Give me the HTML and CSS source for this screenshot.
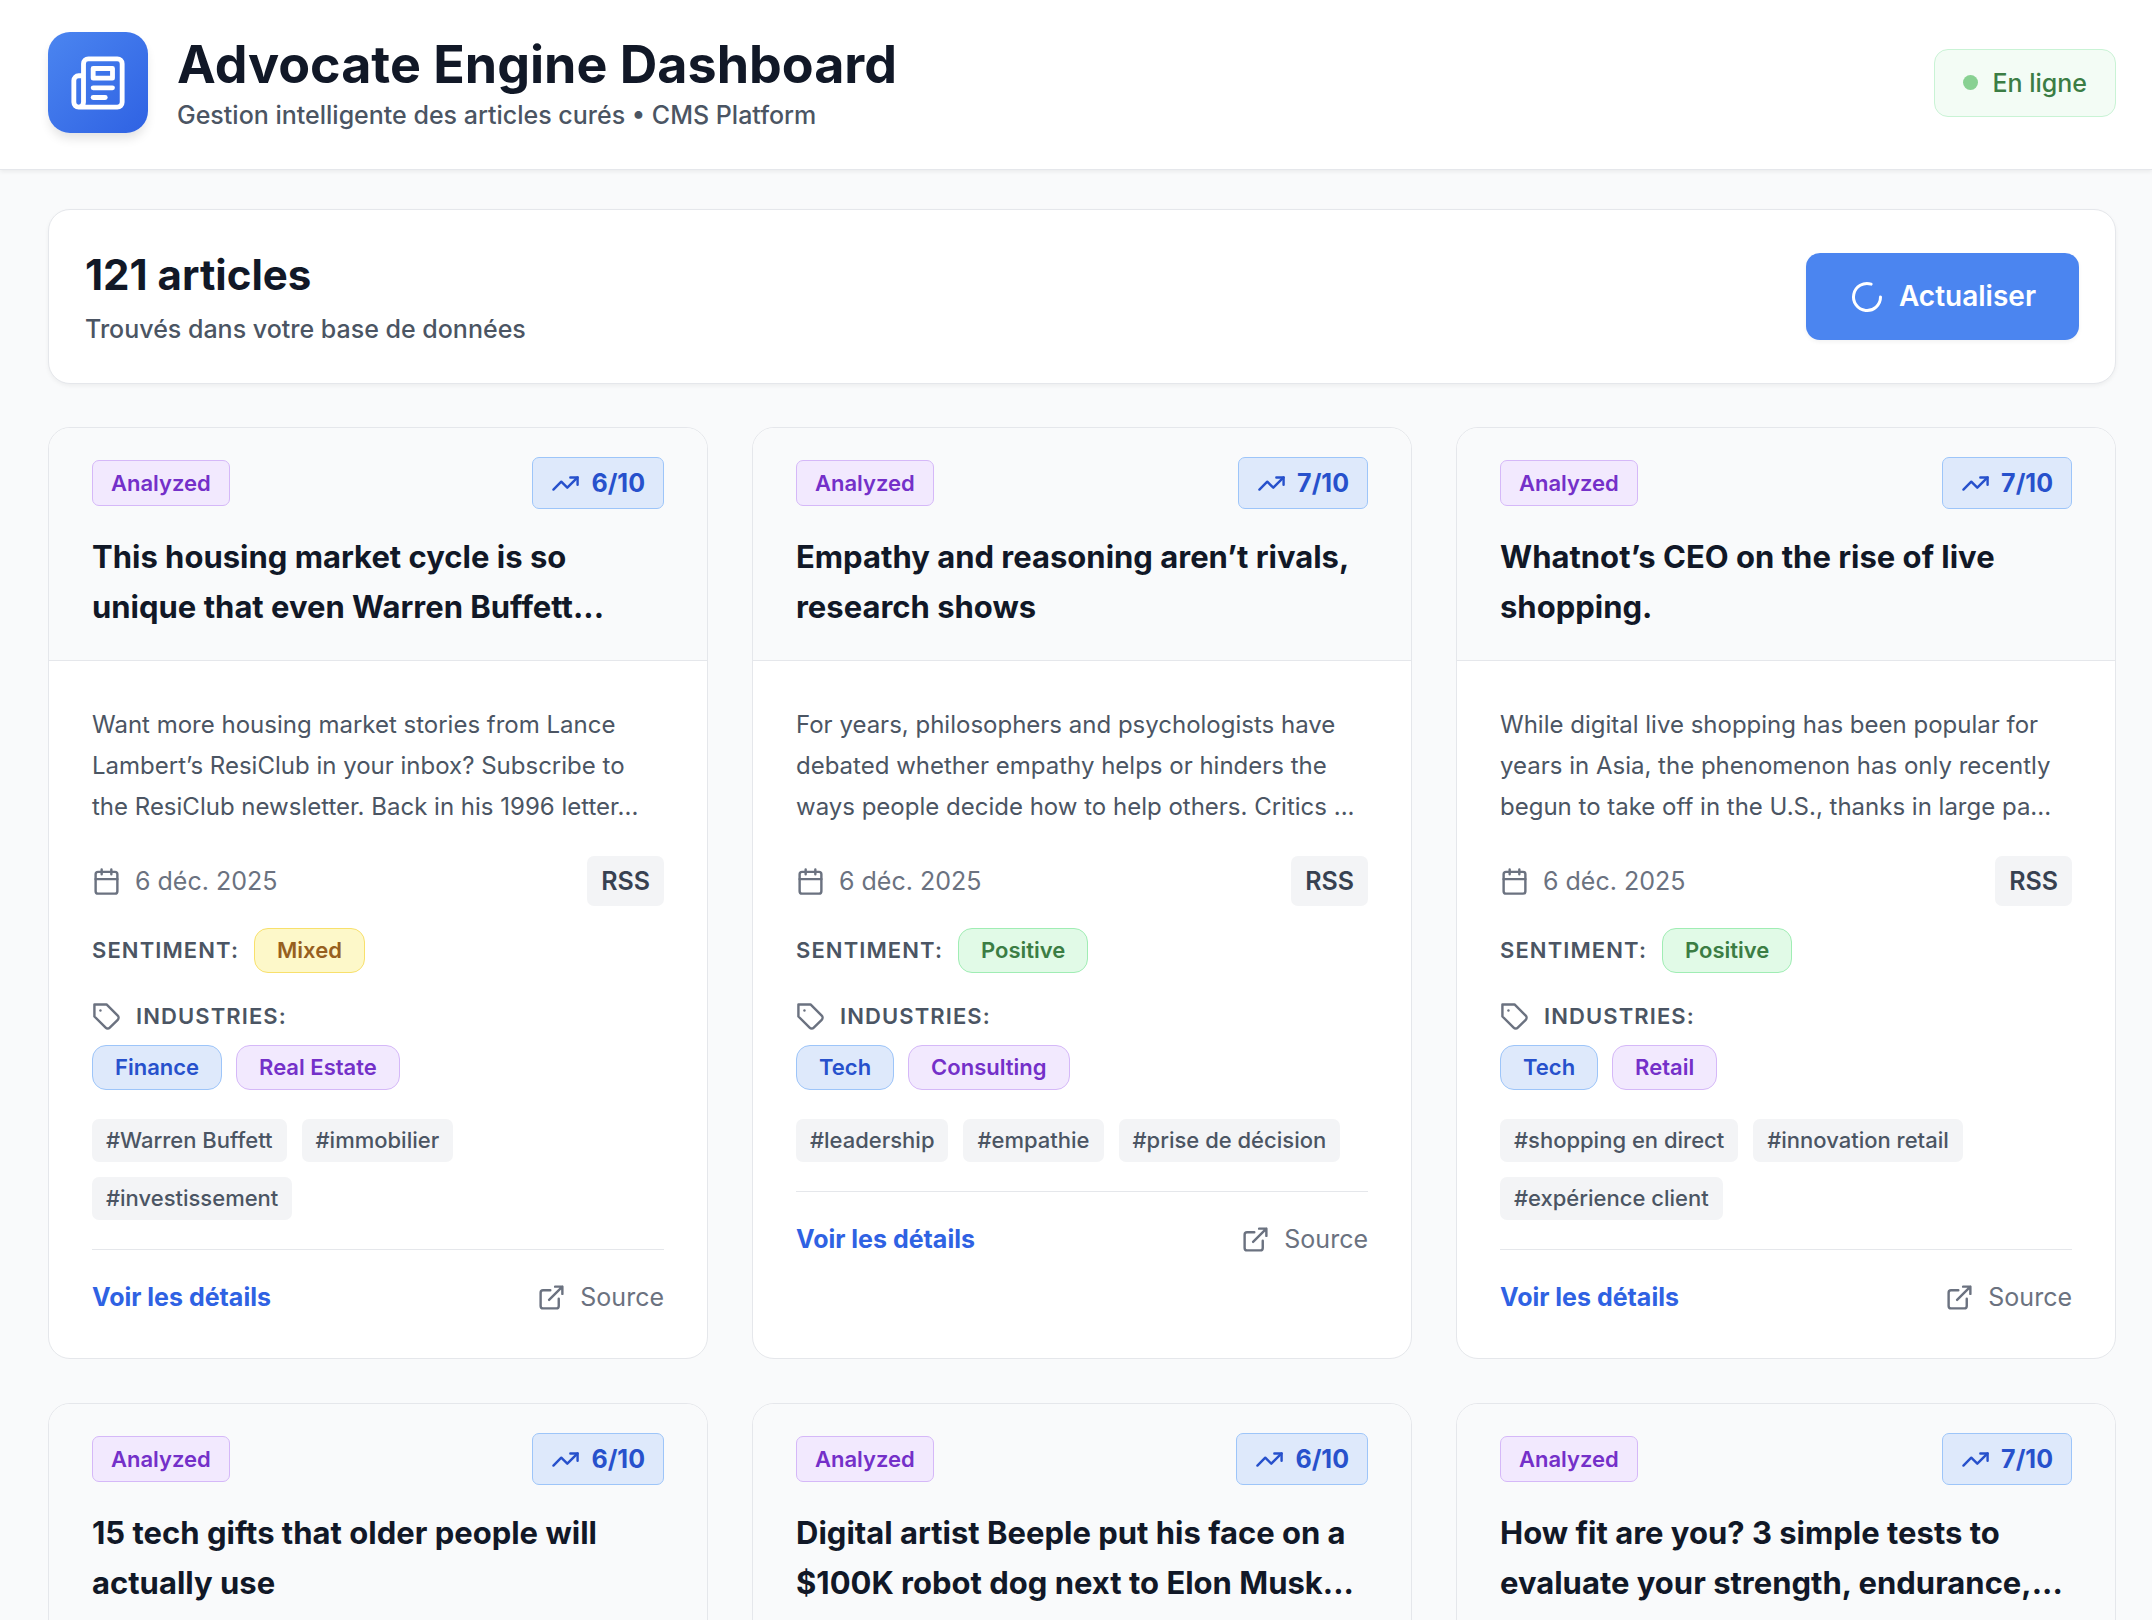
FILE: index.html
```html
<!DOCTYPE html>
<html lang="fr">
<head>
  <meta charset="UTF-8">
  <meta name="viewport" content="width=device-width, initial-scale=1.0">
  <title>Advocate Engine Dashboard</title>
  <link rel="stylesheet" href="styles.css">
</head>
<body>

  <!-- Shared icons -->
  <svg class="sprite" aria-hidden="true">
    <symbol id="icon-news" viewBox="0 0 24 24">
      <path d="M4 22h16a2 2 0 0 0 2-2V4a2 2 0 0 0-2-2H8a2 2 0 0 0-2 2v16a2 2 0 0 1-2 2Zm0 0a2 2 0 0 1-2-2v-9c0-1.100.900-2 2-2h2"/>
      <path d="M18 14h-8"/>
      <path d="M15 18h-5"/>
      <path d="M10 6h8v4h-8V6Z"/>
    </symbol>
    <symbol id="icon-trend" viewBox="0 0 24 24">
      <path d="M22 7 13.500 15.500 8.500 10.500 2 17"/>
      <path d="M16 7h6v6"/>
    </symbol>
    <symbol id="icon-calendar" viewBox="0 0 24 24">
      <rect x="3" y="4" width="18" height="18" rx="2"/>
      <path d="M16 2v4M8 2v4M3 10h18"/>
    </symbol>
    <symbol id="icon-tag" viewBox="0 0 24 24">
      <path d="M12 2H2v10l9.290 9.290c.940.940 2.480.940 3.420 0l6.580-6.580c.940-.940.940-2.480 0-3.420L12 2Z"/>
      <path d="M7 7h.010"/>
    </symbol>
    <symbol id="icon-link" viewBox="0 0 24 24">
      <path d="M18 13v6a2 2 0 0 1-2 2H5a2 2 0 0 1-2-2V8a2 2 0 0 1 2-2h6"/>
      <path d="M15 3h6v6M10 14 21 3"/>
    </symbol>
    <symbol id="icon-loader" viewBox="0 0 24 24">
      <path d="M21 12a9 9 0 1 1-6.219-8.560"/>
    </symbol>
  </svg>

  <header class="header">
    <div class="brand">
      <div class="logo"><svg class="icon"><use href="#icon-news"/></svg></div>
      <div>
        <h1>Advocate Engine Dashboard</h1>
        <p class="subtitle">Gestion intelligente des articles curés • CMS Platform</p>
      </div>
    </div>
    <div class="status"><span class="dot"></span>En ligne</div>
  </header>

  <main class="main">
    <section class="toolbar">
      <div>
        <h2>121 articles</h2>
        <p class="subtitle">Trouvés dans votre base de données</p>
      </div>
      <button class="refresh" type="button"><svg class="icon"><use href="#icon-loader"/></svg>Actualiser</button>
    </section>

    <div class="grid" id="articles"></div>
  </main>

  <script>
    var articles = [
      {
        score: 6,
        title: "This housing market cycle is so unique that even Warren Buffett...",
        text: "Want more housing market stories from Lance Lambert’s ResiClub in your inbox? Subscribe to the ResiClub newsletter. Back in his 1996 letter...",
        sentiment: "Mixed",
        industries: ["Finance", "Real Estate"],
        tags: ["Warren Buffett", "immobilier", "investissement"]
      },
      {
        score: 7,
        title: "Empathy and reasoning aren’t rivals, research shows",
        text: "For years, philosophers and psychologists have debated whether empathy helps or hinders the ways people decide how to help others. Critics ...",
        sentiment: "Positive",
        industries: ["Tech", "Consulting"],
        tags: ["leadership", "empathie", "prise de décision"]
      },
      {
        score: 7,
        title: "Whatnot’s CEO on the rise of live shopping.",
        text: "While digital live shopping has been popular for years in Asia, the phenomenon has only recently begun to take off in the U.S., thanks in large pa...",
        sentiment: "Positive",
        industries: ["Tech", "Retail"],
        tags: ["shopping en direct", "innovation retail", "expérience client"]
      },
      { score: 6, title: "15 tech gifts that older people will actually use" },
      { score: 6, title: "Digital artist Beeple put his face on a $100K robot dog next to Elon Musk..." },
      { score: 7, title: "How fit are you? 3 simple tests to evaluate your strength, endurance,..." }
    ];

    function icon(name) {
      return `<svg class="icon"><use href="#icon-${name}"/></svg>`;
    }

    function renderBody(article) {
      if (!article.text) {
        return "";
      }

      var industries = article.industries.map(function(name, index) {
        return `<span class="pill ${index === 0 ? "blue" : "purple"}">${name}</span>`;
      }).join("");

      var tags = article.tags.map(function(tag) {
        return `<span class="tag">#${tag}</span>`;
      }).join("");

      return `
        <p class="excerpt">${article.text}</p>
        <div class="meta">
          <span class="date">${icon("calendar")}6 déc. 2025</span>
          <span class="source-type">RSS</span>
        </div>
        <div class="sentiment">
          <span class="label">Sentiment:</span>
          <span class="pill ${article.sentiment.toLowerCase()}">${article.sentiment}</span>
        </div>
        <div class="label industries-label">${icon("tag")}Industries:</div>
        <div class="pills">${industries}</div>
        <div class="tags">${tags}</div>
        <div class="card-footer">
          <button class="details" type="button">Voir les détails</button>
          <a class="source" href="#">${icon("link")}Source</a>
        </div>`;
    }

    document.getElementById("articles").innerHTML = articles.map(function(article) {
      return `
        <article class="card">
          <div class="card-header">
            <div class="card-top">
              <span class="state">Analyzed</span>
              <span class="score">${icon("trend")}${article.score}/10</span>
            </div>
            <h3>${article.title}</h3>
          </div>
          <div class="card-body">${renderBody(article)}</div>
        </article>`;
    }).join("");
  </script>

</body>
</html>
```

FILE: styles.css
```css
* {
  box-sizing: border-box;
}

body {
  font-family: Inter, "Liberation Sans", sans-serif;
  font-size: 25px;
  line-height: 36px;
  background-color: #f9fafb;
  color: #111827;
  margin: 0;
}

h1, h2, h3, p {
  margin: 0;
}

button {
  font-family: inherit;
  cursor: pointer;
}

.sprite {
  display: none;
}

.icon {
  width: 29px;
  height: 29px;
  flex-shrink: 0;
  fill: none;
  stroke: currentColor;
  stroke-width: 2;
  stroke-linecap: round;
  stroke-linejoin: round;
}

.header {
  display: flex;
  align-items: center;
  justify-content: space-between;
  padding: 32px 36px 36px 48px;
  background-color: #fff;
  border-bottom: 1px solid #e5e7eb;
  box-shadow: 0 2px 4px rgba(0, 0, 0, 0.06);
}

.brand {
  display: flex;
  align-items: center;
  gap: 29px;
}

.logo {
  display: flex;
  align-items: center;
  justify-content: center;
  width: 100px;
  height: 101px;
  border-radius: 22px;
  background: linear-gradient(135deg, #4b85f0, #2f62e3);
  box-shadow: 0 7px 11px -2px rgba(0, 0, 0, 0.12);
  color: #fff;
}

.logo .icon {
  width: 58px;
  height: 58px;
}

h1 {
  font-size: 52px;
  font-weight: 700;
  line-height: 64px;
}

.subtitle {
  color: #4b5563;
  font-weight: 500;
}

.status {
  display: flex;
  align-items: center;
  gap: 14px;
  padding: 15px 28px;
  border: 1px solid #c9f3d5;
  border-radius: 14px;
  background-color: #f3fcf5;
  color: #3b7d44;
  font-weight: 500;
}

.dot {
  width: 15px;
  height: 15px;
  border-radius: 50%;
  background-color: #88d192;
}

.main {
  padding: 39px 36px 44px 48px;
}

.toolbar {
  display: flex;
  align-items: center;
  justify-content: space-between;
  padding: 36px;
  margin-bottom: 43px;
  border: 1px solid #e5e7eb;
  border-radius: 22px;
  background-color: #fff;
  box-shadow: 0 2px 4px rgba(0, 0, 0, 0.05);
}

h2 {
  font-size: 42px;
  font-weight: 700;
  line-height: 58px;
  margin-bottom: 7px;
}

.refresh {
  display: flex;
  align-items: center;
  gap: 14px;
  padding: 22px 43px;
  border: none;
  border-radius: 14px;
  background-color: #4b85f0;
  color: #fff;
  font-size: 28px;
  font-weight: 600;
  line-height: 43px;
  box-shadow: 0 2px 4px rgba(0, 0, 0, 0.05);
}

.refresh .icon {
  width: 36px;
  height: 36px;
}

.grid {
  display: grid;
  grid-template-columns: repeat(3, 1fr);
  gap: 44px;
}

.card {
  border: 1px solid #e5e7eb;
  border-radius: 22px;
  background-color: #fff;
  overflow: hidden;
}

.card-header {
  padding: 29px 43px 28px;
  border-bottom: 1px solid #e5e7eb;
  background-color: #f9fafb;
}

.card-top {
  display: flex;
  align-items: center;
  justify-content: space-between;
  margin-bottom: 23px;
}

.state {
  padding: 7px 18px;
  border: 1px solid #d5b8f8;
  border-radius: 7px;
  background-color: #f2e9fe;
  color: #7430c9;
  font-size: 22px;
  font-weight: 600;
  line-height: 30px;
}

.score {
  display: flex;
  align-items: center;
  gap: 11px;
  padding: 7px 18px;
  border: 1px solid #9dc5f9;
  border-radius: 7px;
  background-color: #dee9fb;
  color: #2751cc;
  font-weight: 700;
}

h3 {
  font-size: 31px;
  font-weight: 700;
  line-height: 50px;
}

.card-body {
  padding: 43px;
}

.excerpt {
  color: #4b5563;
  font-size: 24px;
  line-height: 41px;
  margin-bottom: 29px;
}

.meta {
  display: flex;
  align-items: center;
  justify-content: space-between;
  margin-bottom: 22px;
}

.date {
  display: flex;
  align-items: center;
  gap: 14px;
  color: #6b7280;
}

.source-type {
  padding: 7px 14px;
  border-radius: 7px;
  background-color: #f3f4f6;
  color: #374151;
  font-weight: 600;
}

.sentiment {
  display: flex;
  align-items: center;
  gap: 15px;
  margin-bottom: 29px;
}

.label {
  color: #4b5563;
  font-size: 22px;
  font-weight: 600;
  line-height: 29px;
  letter-spacing: 0.05em;
  text-transform: uppercase;
}

.industries-label {
  display: flex;
  align-items: center;
  gap: 15px;
  margin-bottom: 14px;
}

.industries-label .icon {
  color: #6b7280;
}

.pills {
  display: flex;
  flex-wrap: wrap;
  gap: 14px;
  margin-bottom: 29px;
}

.pill {
  padding: 7px 22px;
  border: 1px solid;
  border-radius: 14px;
  font-size: 22px;
  font-weight: 600;
  line-height: 29px;
}

.blue {
  background-color: #dee9fb;
  border-color: #9dc5f9;
  color: #2751cc;
}

.purple {
  background-color: #f2e9fe;
  border-color: #d5b8f8;
  color: #7430c9;
}

.mixed {
  background-color: #fdf8c9;
  border-color: #f8e06c;
  color: #97601f;
}

.positive {
  background-color: #e1fae7;
  border-color: #a0edb4;
  color: #3b7d44;
}

.tags {
  display: flex;
  flex-wrap: wrap;
  gap: 15px;
  margin-bottom: 29px;
}

.tag {
  padding: 7px 14px;
  border-radius: 7px;
  background-color: #f3f4f6;
  color: #4b5563;
  font-size: 22px;
  font-weight: 500;
  line-height: 29px;
}

.card-footer {
  display: flex;
  align-items: center;
  justify-content: space-between;
  padding-top: 29px;
  border-top: 1px solid #e5e7eb;
}

.details {
  padding: 0;
  border: none;
  background: none;
  color: #2f62e3;
  font-size: 25px;
  font-weight: 700;
  line-height: 36px;
}

.source {
  display: flex;
  align-items: center;
  gap: 14px;
  color: #6b7280;
  text-decoration: none;
}
```
